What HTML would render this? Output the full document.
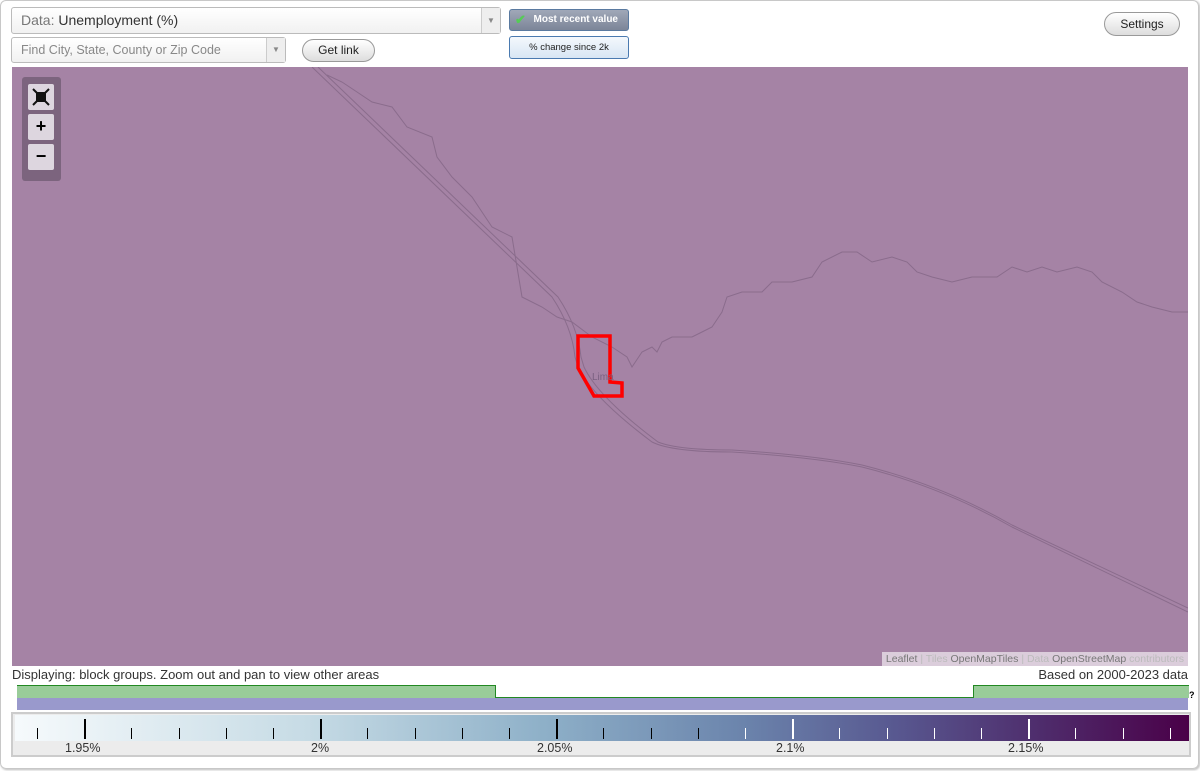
<!DOCTYPE html><html><head><style>
body{margin:0;width:1200px;height:771px;background:#fff;font-family:"Liberation Sans",sans-serif;position:relative;overflow:hidden}
.frame{position:absolute;left:0;top:0;width:1197px;height:767px;border:1px solid #c8c8c8;border-radius:6px;box-shadow:1px 1px 2px #bbb}
.abs{position:absolute}
.sel{border:1px solid #bbb;border-radius:3px;background:linear-gradient(#fff,#f1f1f1);box-sizing:border-box}
.arr{position:absolute;right:0;top:0;bottom:0;width:18px;border-left:1px solid #ccc;background:#eee;color:#888;font-size:8px;text-align:center}
.btn{border:1px solid #999;border-radius:12px;background:linear-gradient(#fff,#ddd);font-size:12px;text-align:center;box-sizing:border-box;color:#222}
.tb{position:absolute;width:1px;background:#000}
</style></head><body>
<div class="frame"></div>
<div class="abs sel" style="left:11px;top:7px;width:490px;height:27px;font-size:14px;line-height:25px;padding-left:9px;color:#333"><span style="color:#777">Data:</span> Unemployment (%)<div class="arr" style="line-height:25px">▼</div></div>
<div class="abs sel" style="left:11px;top:37px;width:275px;height:26px;font-size:12.5px;line-height:24px;padding-left:9px;color:#888">Find City, State, County or Zip Code<div class="arr" style="line-height:24px">▼</div></div>
<div class="abs btn" style="left:302px;top:39px;width:73px;height:23px;line-height:21px">Get link</div>
<div class="abs" style="left:509px;top:9px;width:120px;height:22px;border:1px solid #5a7aa0;border-radius:3px;background:linear-gradient(#a0a8b8,#7c8598);color:#fff;font-size:10px;font-weight:bold;line-height:20px;box-sizing:border-box;text-align:right;padding-right:10px"><span style="position:absolute;left:5px;top:0;color:#5c5;font-size:13px">✔</span>Most recent value</div>
<div class="abs" style="left:509px;top:36px;width:120px;height:23px;border:1px solid #4a7ab0;border-radius:3px;background:linear-gradient(#f4f8fc,#d8e6f4);color:#222;font-size:9.5px;line-height:21px;box-sizing:border-box;text-align:center">% change since 2k</div>
<div class="abs btn" style="left:1104px;top:12px;width:76px;height:24px;line-height:22px">Settings</div>
<div class="abs" style="left:12px;top:67px;width:1176px;height:599px;background:#a583a5;overflow:hidden">
<svg width="1176" height="599" style="position:absolute;left:0;top:0" fill="none" stroke="#8a6c8c" stroke-width="1">
<path d="M300 0 L540 230 Q560 260 563 290 L566 300 Q580 330 640 375 Q660 385 720 385 Q800 390 850 400 Q930 420 1000 460 L1176 545"/>
<path d="M306 0 L546 230 Q566 260 569 290 L572 300 Q586 330 646 375 Q666 383 720 383 Q800 388 850 398 Q930 418 1000 458 L1176 541"/>
<path d="M315 8 L330 15 L345 25 L360 35 L380 40 L395 60 L420 70 L425 90 L440 110 L460 130 L470 145 L480 160 L500 170 L505 200 L510 230 L530 240 L545 250 L560 255 L580 270 L600 280 L615 290 L620 300 L630 285 L640 280 L645 285 L650 275 L660 270 L680 270 L690 265 L700 260 L710 245 L715 230 L730 225 L750 225 L760 215 L780 215 L800 210 L810 195 L830 185 L845 185 L860 195 L880 190 L895 195 L905 205 L920 210 L940 215 L960 210 L985 210 L1000 200 L1015 205 L1030 200 L1045 205 L1065 200 L1080 205 L1090 215 L1110 225 L1125 235 L1140 240 L1160 245 L1176 245"/>
<polygon points="566,269 598,269 598,315 610,316 610,329 582,329 566,301" stroke="#f00" stroke-width="3.5" stroke-linejoin="miter"/>
</svg>
<div class="abs" style="left:580px;top:305px;font-size:10px;color:#7a6080">Lima</div>
<div class="abs" style="left:10px;top:10px;width:39px;height:104px;background:#7c647e;border-radius:3px"></div>
<div class="abs" style="left:16px;top:17px;width:26px;height:26px;background:#ddd6df;border-radius:2px">
<svg width="26" height="26"><rect x="8" y="8" width="10" height="10" fill="#111"/><path d="M5 5l4 4M21 5l-4 4M5 21l4-4M21 21l-4-4" stroke="#111" stroke-width="2"/></svg></div>
<div class="abs" style="left:16px;top:47px;width:26px;height:26px;background:#ddd6df;border-radius:2px;font-size:18px;font-weight:bold;text-align:center;line-height:25px">+</div>
<div class="abs" style="left:16px;top:77px;width:26px;height:26px;background:#ddd6df;border-radius:2px;font-size:18px;font-weight:bold;text-align:center;line-height:24px">−</div>
<div class="abs" style="right:0;bottom:0;height:14px;background:rgba(255,255,255,.6);font-size:10.5px;line-height:14px;padding:0 4px;color:#bbb"><span style="color:#777">Leaflet</span> | Tiles <span style="color:#777">OpenMapTiles</span> | Data <span style="color:#777">OpenStreetMap</span> contributors</div>
</div>
<div class="abs" style="left:12px;top:667px;font-size:13px;color:#333">Displaying: block groups. Zoom out and pan to view other areas</div>
<div class="abs" style="right:12px;top:667px;font-size:13px;color:#333">Based on 2000-2023 data</div>
<div class="abs" style="left:17px;top:685px;width:478px;height:12px;background:#9c9;border-top:1px solid #282;border-right:1px solid #282"></div>
<div class="abs" style="left:495px;top:697px;width:478px;height:1px;background:#282"></div>
<div class="abs" style="left:973px;top:685px;width:215px;height:12px;background:#9c9;border-top:1px solid #282;border-left:1px solid #282"></div>
<div class="abs" style="left:17px;top:698px;width:1171px;height:12px;background:#99c"></div>
<div class="abs" style="left:1189px;top:690px;font-size:9px;font-weight:bold">?</div>
<div class="abs" style="left:11px;top:712px;width:1180px;height:45px;border:2px solid #ccc;box-sizing:border-box;background:#ececec">
<div class="abs" style="left:2px;top:1px;width:1174px;height:26px;background:linear-gradient(90deg,#f6fafc,#c6dbe5 25%,#8eb0c8 45%,#6b84ac 62%,#585890 75%,#4e2a6a 88%,#4a0048)"></div>
<div class="abs" style="left:0;top:27px;width:1176px;font-size:12.5px;color:#333">
<span class="abs" style="left:52px">1.95%</span><span class="abs" style="left:298px">2%</span><span class="abs" style="left:524px">2.05%</span><span class="abs" style="left:763px">2.1%</span><span class="abs" style="left:995px">2.15%</span></div>
</div>
<div id="t"></div>
<script>
var h='';for(var i=0;i<25;i++){var x=37+i*47.2;var big=(i%5==1);var c=x>700?'#fff':'#000';h+='<div class="tb" style="left:'+Math.round(x)+'px;top:'+(big?719:728)+'px;height:'+(big?20:11)+'px;background:'+c+';width:'+(big?2:1)+'px"></div>';}document.getElementById('t').innerHTML=h;
</script>
</body></html>
